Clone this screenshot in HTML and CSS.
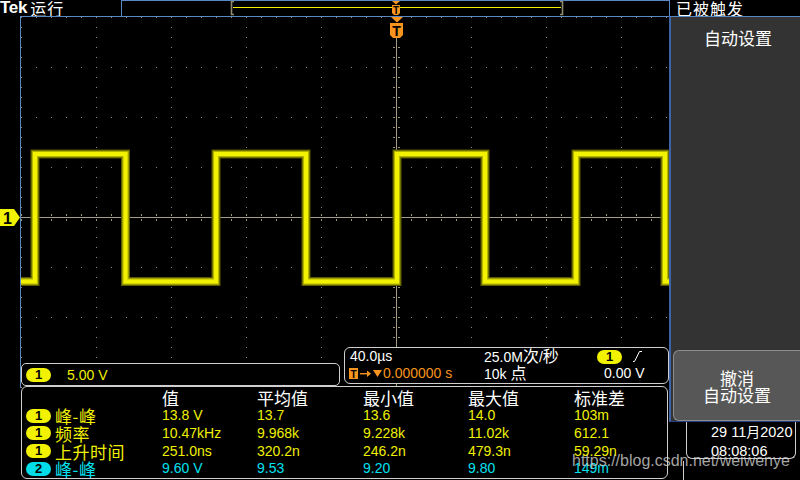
FILE: index.html
```html
<!DOCTYPE html>
<html lang="zh">
<head>
<meta charset="utf-8">
<title>Tek 运行</title>
<link rel="stylesheet" href="styles.css">
</head>
<body>
<div class="screen">
  <header class="topbar">
    <div class="brand"><span class="tek">Tek</span><span class="run">运行</span></div>
    <div class="record">
      <svg width="547" height="15" viewBox="122 1 547 15">
        <rect x="233" y="7" width="328" height="1" fill="#f0f000"/>
        <path d="M234 1.5 H231.5 V14.5 H234" stroke="#8f8a70" stroke-width="1.6" fill="none"/>
        <path d="M560 1.5 H562.5 V14.5 H560" stroke="#8f8a70" stroke-width="1.6" fill="none"/>
        <polygon points="392,1 400,1 396,4.5" fill="#f7941d"/>
        <path d="M392 5 H400 V13 L398 15 H394 L392 13 Z" fill="#f7941d"/>
        <text x="396" y="13.5" class="svg-t small">T</text>
      </svg>
    </div>
    <div class="trig-state">已被触发</div>
  </header>

  <div class="main">
    <section class="scope">
      <svg class="grat" width="669" height="464" viewBox="0 16 669 464">
        <defs>
          <pattern id="hdots" x="21" y="17" width="15" height="50" patternUnits="userSpaceOnUse">
            <rect width="1" height="1" fill="#8f886e"/>
          </pattern>
          <pattern id="vdots" x="21" y="17" width="75" height="10" patternUnits="userSpaceOnUse">
            <rect width="1" height="1" fill="#8f886e"/>
          </pattern>
          <pattern id="hticks" x="21" y="214" width="15" height="7" patternUnits="userSpaceOnUse">
            <rect y="0" width="1" height="2" fill="#9a9378"/>
            <rect y="5" width="1" height="2" fill="#9a9378"/>
          </pattern>
          <pattern id="vticks" x="393" y="17" width="8" height="10" patternUnits="userSpaceOnUse">
            <rect x="0" width="2" height="1" fill="#9a9378"/>
            <rect x="5" width="2" height="1" fill="#9a9378"/>
          </pattern>
        </defs>
        <rect x="21" y="17" width="648" height="402" fill="url(#hdots)"/>
        <rect x="21" y="17" width="648" height="402" fill="url(#vdots)"/>
        <rect x="21" y="214" width="648" height="7" fill="url(#hticks)"/>
        <rect x="393" y="38" width="8" height="380" fill="url(#vticks)"/>
        <rect x="21" y="217" width="648" height="1" fill="#a39d84"/>
        <rect x="396" y="38" width="1" height="380" fill="#a39d84"/>
        <rect x="20" y="16" width="649" height="1" fill="#5b87c5"/>
        <rect x="20" y="16" width="1" height="372" fill="#5b87c5"/>

        <path class="tr-outer" d="M21 281.5 H35 V154 H125.5 V281.5 H216 V154 H306 V281.5 H397 V154 H485 V281.5 H576 V154 H665 V281.5 H669"/>
        <path class="tr-mid" d="M21 281.5 H35 V154 H125.5 V281.5 H216 V154 H306 V281.5 H397 V154 H485 V281.5 H576 V154 H665 V281.5 H669"/>
        <path class="tr-core" d="M21 281.5 H35 V154 H125.5 V281.5 H216 V154 H306 V281.5 H397 V154 H485 V281.5 H576 V154 H665 V281.5 H669"/>

        <polygon points="0,209 14,209 20,217.5 14,226 0,226" fill="#f2f200"/>
        <text x="7.5" y="223.5" class="svg-one">1</text>

        <polygon points="391,17 403,17 397,22.5" fill="#f7941d"/>
        <path d="M390 23 H403 V35 L400 38 H393 L390 35 Z" fill="#f7941d"/>
        <text x="396.5" y="35.5" class="svg-t">T</text>
      </svg>

      <div class="readouts">
        <div class="readrow">
          <div class="chbox">
            <span class="pill">1</span><span class="chval">5.00 V</span>
          </div>
          <div class="acq">
            <span>40.0µs</span>
            <span>25.0M<span class="cjk">次</span>/<span class="cjk">秒</span></span>
            <span class="trigsrc"><span class="pill">1</span>
              <svg class="slope" width="9" height="11" viewBox="0 0 9 11"><polyline points="0,10.5 1.5,10.5 6.5,0.5 9,0.5" fill="none" stroke="#fff" stroke-width="1"/></svg>
            </span>
            <span class="pos">
              <svg width="34" height="13" viewBox="0 0 34 13">
                <rect x="0" y="1" width="9" height="11" fill="#f7941d"/>
                <text x="4.5" y="10.5" class="svg-t small">T</text>
                <rect x="11" y="6" width="8" height="1.4" fill="#f7941d"/>
                <polygon points="18,3.5 22,6.7 18,9.9" fill="#f7941d"/>
                <polygon points="24,3 33,3 28.5,10" fill="#f7941d"/>
              </svg>
              <span class="orange">0.000000 s</span>
            </span>
            <span>10k <span class="cjk">点</span></span>
            <span class="lvl">0.00 V</span>
          </div>
        </div>

        <div class="meas">
          <span></span>
          <span class="hd cjk">值</span>
          <span class="hd cjk">平均值</span>
          <span class="hd cjk">最小值</span>
          <span class="hd cjk">最大值</span>
          <span class="hd cjk">标准差</span>

          <span class="lbl"><span class="pill">1</span><span class="cjk">峰-峰</span></span>
          <span class="y">13.8 V</span><span class="y">13.7</span><span class="y">13.6</span><span class="y">14.0</span><span class="y">103m</span>

          <span class="lbl"><span class="pill">1</span><span class="cjk">频率</span></span>
          <span class="y">10.47kHz</span><span class="y">9.968k</span><span class="y">9.228k</span><span class="y">11.02k</span><span class="y">612.1</span>

          <span class="lbl"><span class="pill">1</span><span class="cjk">上升时间</span></span>
          <span class="y">251.0ns</span><span class="y">320.2n</span><span class="y">246.2n</span><span class="y">479.3n</span><span class="y">59.29n</span>

          <span class="lbl cyan"><span class="pill pill-c">2</span><span class="cjk">峰-峰</span></span>
          <span class="c">9.60 V</span><span class="c">9.53</span><span class="c">9.20</span><span class="c">9.80</span><span class="c">149m</span>
        </div>
      </div>
    </section>

    <aside class="side">
      <div class="menu">
        <div class="menu-title">自动设置</div>
        <div class="undo">撤消<br>自动设置</div>
      </div>
      <div class="datebox">29 11<span class="cjk">月</span>2020<br>08:08:06</div>
      <div class="stub"></div>
    </aside>
  </div>

  <div class="watermark">https://blog.csdn.net/weiwenye</div>
</div>
</body>
</html>
```

FILE: styles.css
```css
* {
  box-sizing: border-box;
  margin: 0;
  padding: 0;
}

html, body {
  background: #000;
}

body {
  width: 800px;
  height: 480px;
  overflow: hidden;
  font-family: "Liberation Sans", "Noto Sans CJK SC", sans-serif;
  font-size: 14px;
  color: #fff;
}

.screen {
  position: relative;
  width: 800px;
  height: 480px;
}

.cjk {
  font-family: "Noto Sans CJK SC", sans-serif;
}

/* ---------- top bar ---------- */
.topbar {
  display: flex;
  height: 16px;
}

.brand {
  width: 121px;
  display: flex;
  align-items: center;
  gap: 3px;
  height: 16px;
  line-height: 16px;
}

.tek {
  font-weight: bold;
  font-size: 17px;
  letter-spacing: -0.3px;
}

.run {
  font-family: "Noto Sans CJK SC", sans-serif;
  font-size: 16px;
  letter-spacing: 1px;
}

.record {
  width: 549px;
  height: 16px;
  border: 1px solid #5b87c5;
  border-bottom: 0;
}

.record svg {
  display: block;
}

.trig-state {
  padding-left: 6px;
  font-family: "Noto Sans CJK SC", sans-serif;
  font-size: 16px;
  letter-spacing: 1px;
  line-height: 16px;
  white-space: nowrap;
}

/* ---------- main ---------- */
.main {
  display: flex;
  height: 464px;
}

.scope {
  width: 669px;
  height: 464px;
  display: grid;
  grid-template-rows: 1fr auto;
  grid-template-columns: 669px;
}

.grat {
  grid-area: 1 / 1 / 3 / 2;
  display: block;
}

.svg-one {
  font-family: "Liberation Sans", sans-serif;
  font-weight: bold;
  font-size: 16px;
  fill: #000;
  text-anchor: middle;
}

.svg-t {
  font-family: "Liberation Sans", sans-serif;
  font-weight: bold;
  font-size: 14px;
  fill: #000;
  text-anchor: middle;
}

.svg-t.small {
  font-size: 10px;
}

.tr-outer,
.tr-mid,
.tr-core {
  fill: none;
  stroke-linejoin: miter;
}

.tr-outer {
  stroke: #5a5a00;
  stroke-width: 9;
}

.tr-mid {
  stroke: #b4b400;
  stroke-width: 6.5;
}

.tr-core {
  stroke: #f2f200;
  stroke-width: 4;
}

.readouts {
  grid-area: 2 / 1;
  padding: 0 0 1px 21px;
}

.readrow {
  display: flex;
  align-items: flex-end;
  height: 40px;
}

.pill {
  width: 25px;
  height: 14px;
  border-radius: 7px;
  background: #f2f200;
  color: #000;
  font-weight: bold;
  font-size: 13px;
  line-height: 14px;
  text-align: center;
  flex: none;
}

.pill-c {
  background: #00dce8;
}

.chbox {
  width: 319px;
  height: 23px;
  border: 1px solid #cfcfcf;
  border-radius: 5px;
  background: #000;
  display: flex;
  align-items: center;
  padding-left: 4px;
}

.chval {
  margin-left: 16px;
  color: #f0f000;
}

.acq {
  width: 325px;
  height: 37px;
  margin-left: 4px;
  margin-bottom: 2px;
  border: 1px solid #cfcfcf;
  border-radius: 6px;
  background: #000;
  padding-left: 5px;
  display: grid;
  grid-template-columns: 134px 113px 1fr;
  grid-template-rows: 17px 17px;
  align-items: center;
  white-space: nowrap;
  line-height: 17px;
}

.acq .cjk {
  font-size: 16px;
}

.trigsrc {
  display: flex;
  align-items: center;
  gap: 11px;
}

.slope {
  display: block;
}

.pos {
  display: flex;
  align-items: center;
  margin-left: -1px;
}

.pos svg {
  display: block;
  flex: none;
}

.orange {
  color: #f7941d;
}

.lvl {
  padding-left: 7px;
}

/* ---------- measurement table ---------- */
.meas {
  height: 93px;
  width: 647px;
  border: 1px solid #cfcfcf;
  border-radius: 6px;
  background: #000;
  padding: 1px 0 0 4px;
  display: grid;
  grid-template-columns: 136px 95px 106px 105px 106px 1fr;
  grid-template-rows: 19px repeat(4, 17.67px);
  align-items: center;
  white-space: nowrap;
  line-height: 17px;
}

.hd {
  font-size: 17px;
  color: #fff;
}

.lbl {
  display: flex;
  align-items: center;
  gap: 4px;
  color: #f0f000;
}

.lbl .cjk {
  font-size: 17px;
  letter-spacing: 0.5px;
}

.lbl.cyan {
  color: #00e0f0;
}

.y {
  color: #f0f000;
}

.c {
  color: #00e0f0;
}

/* ---------- side menu ---------- */
.side {
  width: 131px;
  display: flex;
  flex-direction: column;
}

.menu {
  height: 406px;
  background: #333;
  border-top: 1px solid #5b87c5;
  border-left: 2px solid #3d62a6;
  border-bottom: 1px solid #25408a;
  display: flex;
  flex-direction: column;
}

.menu-title {
  margin-top: 11px;
  padding-left: 5px;
  text-align: center;
  font-family: "Noto Sans CJK SC", sans-serif;
  font-size: 17px;
  line-height: 20px;
}

.undo {
  margin-top: auto;
  margin-left: 2px;
  height: 71px;
  background: #575757;
  border: 1px solid #8c8c8c;
  border-right: 0;
  border-radius: 6px 0 0 6px;
  display: flex;
  flex-direction: column;
  justify-content: center;
  text-align: center;
  font-family: "Noto Sans CJK SC", sans-serif;
  font-size: 17px;
  line-height: 17px;
}

.datebox {
  margin-left: 17px;
  width: 110px;
  height: 37px;
  border: 1px solid #cfcfcf;
  border-top: 0;
  border-radius: 0 0 6px 6px;
  padding-left: 24px;
  font-size: 14.5px;
  line-height: 18.5px;
  white-space: nowrap;
}

.datebox .cjk {
  font-size: 14px;
}

.stub {
  margin-left: 14px;
  margin-top: 2px;
  height: 19px;
  border-left: 1px solid #cfcfcf;
}

.watermark {
  position: absolute;
  left: 572px;
  top: 452px;
  font-family: "Liberation Sans", sans-serif;
  font-size: 16px;
  line-height: 18px;
  color: rgba(212, 212, 212, 0.78);
  white-space: nowrap;
}
```
